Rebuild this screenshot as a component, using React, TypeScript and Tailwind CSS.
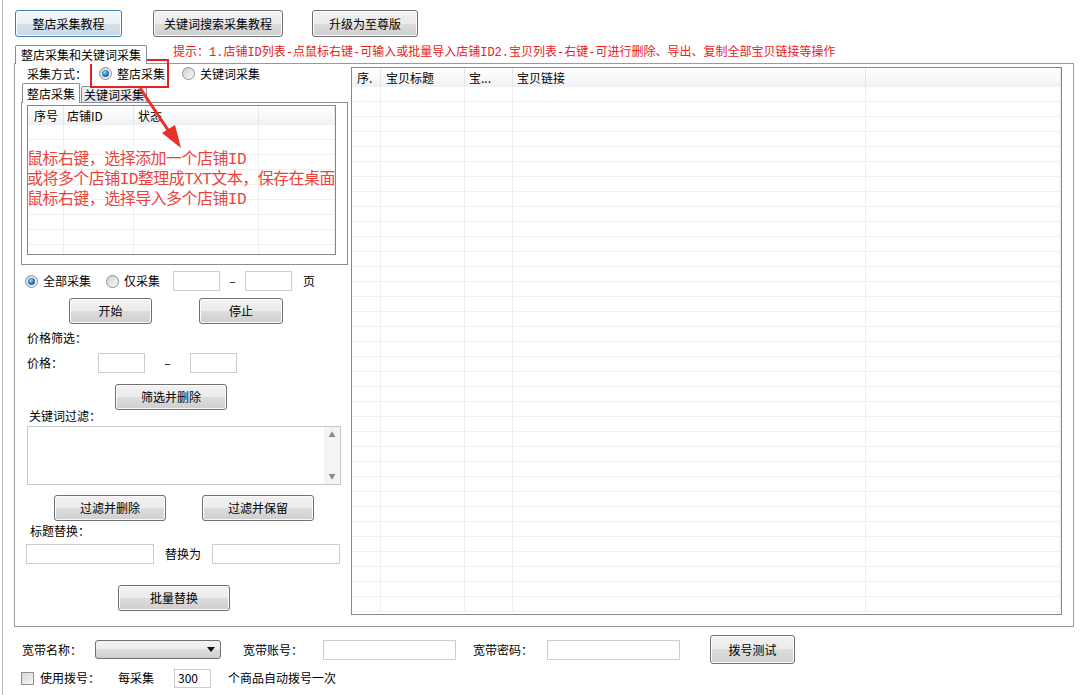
import React from "react";

const btn =
  "flex shrink-0 items-center justify-center rounded-[3px] border border-[#707070] bg-[linear-gradient(to_bottom,#f2f2f2_0%,#ebebeb_50%,#dddddd_50%,#cfcfcf_100%)] shadow-[inset_0_0_0_1px_#fbfbfb] text-[12px] text-black";
const btnFocus =
  "flex shrink-0 items-center justify-center rounded-[3px] border border-[#3c7fb1] bg-[linear-gradient(to_bottom,#f4f8fb_0%,#e8eff5_50%,#d6e2ec_50%,#c9d8e5_100%)] shadow-[inset_0_0_0_1px_#fbfdff] text-[12px] text-black";
const input = "shrink-0 border border-[#cdcdcd] bg-white";

function Radio({ on }: { on?: boolean }) {
  return (
    <span className="flex h-[13px] w-[13px] shrink-0 items-center justify-center rounded-full border border-[#8e8f8f] bg-[linear-gradient(135deg,#cfcfcf,#fbfbfb)]">
      {on && (
        <span className="h-[7px] w-[7px] rounded-full bg-[radial-gradient(circle_at_40%_35%,#9fdcff_0%,#2d7ec1_45%,#0c3f6e_100%)]" />
      )}
    </span>
  );
}

const leftCols = [
  { w: "w-[36px]", label: "序号", pl: "pl-[6px]" },
  { w: "w-[70px]", label: "店铺ID", pl: "pl-[3px]" },
  { w: "w-[125px]", label: "状态", pl: "pl-[4px]" },
  { w: "w-[76px]", label: "", pl: "" },
];

const rightCols = [
  { w: "w-[29px]", label: "序.", pl: "pl-[5px]" },
  { w: "w-[84px]", label: "宝贝标题", pl: "pl-[5px]" },
  { w: "w-[48px]", label: "宝...", pl: "pl-[4px]" },
  { w: "w-[353px]", label: "宝贝链接", pl: "pl-[4px]" },
  { w: "w-[195px]", label: "", pl: "" },
];

function ListView({
  cols,
  rows,
  className,
  children,
}: {
  cols: { w: string; label: string; pl: string }[];
  rows: number;
  className: string;
  children?: React.ReactNode;
}) {
  return (
    <div className={"relative flex shrink-0 flex-col border border-[#828790] bg-white " + className}>
      <div className="flex h-[19px] shrink-0 overflow-hidden bg-[linear-gradient(to_bottom,#ffffff_0%,#f7f8f9_60%,#eef0f2_100%)]">
        {cols.map((c, i) => (
          <div
            key={i}
            className={
              "flex h-full shrink-0 items-center border-r border-[#e3e5e8] text-[12px] text-black " + c.w + " " + c.pl
            }
          >
            {c.label}
          </div>
        ))}
      </div>
      <div className="min-h-0 flex-1 overflow-hidden">
        {Array.from({ length: rows }).map((_, r) => (
          <div key={r} className="flex h-[15px]">
            {cols.map((c, i) => (
              <div key={i} className={"h-full shrink-0 border-b border-r border-[#efefef] " + c.w} />
            ))}
          </div>
        ))}
      </div>
      {children}
    </div>
  );
}

export default function App() {
  return (
    <div className="relative h-[695px] w-[1080px] overflow-hidden bg-[linear-gradient(to_right,#fff_2px,#b9b9b9_2px,#b9b9b9_3px,#fff_3px)] font-[family-name:'Noto_Sans_CJK_SC','Noto_Sans',sans-serif] text-[12px] leading-none text-black">
      {/* top buttons */}
      <div className="flex pl-[15px] pt-[10px]">
        <div className={btnFocus + " h-[27px] w-[107px]"}>整店采集教程</div>
        <div className={btn + " ml-[31px] h-[27px] w-[130px]"}>关键词搜索采集教程</div>
        <div className={btn + " ml-[29px] h-[27px] w-[106px]"}>升级为至尊版</div>
      </div>

      {/* tab row */}
      <div className="mt-[8px] flex h-[18px] items-start">
        <div className="relative z-10 ml-[15px] flex h-[19px] w-[132px] items-center rounded-t-[2px] border border-b-0 border-[#898c95] bg-white pl-[5px] text-[12px]">
          整店采集和关键词采集
        </div>
        <div className="ml-[26px] font-[family-name:'Liberation_Mono','Noto_Sans_CJK_SC',monospace] text-[12px] leading-[16px] text-[#e52222]">
          提示：1.店铺ID列表-点鼠标右键-可输入或批量导入店铺ID2.宝贝列表-右键-可进行删除、导出、复制全部宝贝链接等操作
        </div>
      </div>

      {/* main panel */}
      <div className="ml-[14px] flex h-[564px] w-[1060px] border border-[#9a9a9a] bg-white">
        {/* left column */}
        <div className="flex w-[336px] shrink-0 flex-col">
          <div className="flex h-[19px] items-center">
            <span className="ml-[12px] w-[60px]">采集方式：</span>
            <span className="ml-[12px]">
              <Radio on />
            </span>
            <span className="ml-[5px] w-[48px]">整店采集</span>
            <span className="ml-[17px]">
              <Radio />
            </span>
            <span className="ml-[5px]">关键词采集</span>
          </div>

          {/* inner tabs */}
          <div className="flex h-[19px] items-end">
            <div className="relative z-10 ml-[7px] -mb-px flex h-[20px] w-[58px] items-center justify-center rounded-t-[2px] border border-b-0 border-[#898c95] bg-white">
              整店采集
            </div>
            <div className="ml-px flex h-[16px] w-[66px] items-center justify-center rounded-t-[2px] border border-b-0 border-[#898c95] bg-[linear-gradient(to_bottom,#f3f3f3,#e3e3e3)]">
              关键词采集
            </div>
          </div>
          <div className="ml-[6px] h-[163px] w-[327px] border border-[#898c95] bg-white pl-[5px] pt-[2px]">
            <ListView cols={leftCols} rows={9} className="h-[150px] w-[309px]">
              <div className="absolute left-[-1px] top-[44px] whitespace-nowrap font-[family-name:'Liberation_Mono','Noto_Sans_CJK_SC',monospace] text-[16px] leading-[20px] tracking-[-0.55px] text-[#e8443d]">
                <div>鼠标右键，选择添加一个店铺ID</div>
                <div>或将多个店铺ID整理成TXT文本，保存在桌面</div>
                <div>鼠标右键，选择导入多个店铺ID</div>
              </div>
            </ListView>
          </div>

          {/* radio row */}
          <div className="mt-[6px] flex h-[20px] items-center">
            <span className="ml-[10px]">
              <Radio on />
            </span>
            <span className="ml-[5px] w-[48px]">全部采集</span>
            <span className="ml-[15px]">
              <Radio />
            </span>
            <span className="ml-[5px] w-[36px]">仅采集</span>
            <div className={input + " ml-[13px] h-[20px] w-[47px]"} />
            <span className="w-[25px] text-center">–</span>
            <div className={input + " h-[20px] w-[47px]"} />
            <span className="ml-[11px]">页</span>
          </div>

          <div className="mt-[7px] flex h-[26px]">
            <div className={btn + " ml-[54px] h-[26px] w-[83px]"}>开始</div>
            <div className={btn + " ml-[47px] h-[26px] w-[84px]"}>停止</div>
          </div>

          <div className="mt-[4px] flex h-[20px] items-center pl-[12px]">价格筛选：</div>

          <div className="mt-[5px] flex h-[20px] items-center">
            <span className="ml-[12px] w-[71px]">价格：</span>
            <div className={input + " h-[20px] w-[47px]"} />
            <span className="w-[45px] text-center">–</span>
            <div className={input + " h-[20px] w-[47px]"} />
          </div>

          <div className="mt-[11px] flex h-[26px]">
            <div className={btn + " ml-[100px] h-[26px] w-[112px]"}>筛选并删除</div>
          </div>

          <div className="h-[12px] pl-[14px] leading-[12px]">关键词过滤：</div>

          <div className="ml-[12px] mt-[4px] flex h-[59px] w-[314px] border border-[#c8c8c8] bg-white">
            <div className="flex-1" />
            <div className="flex w-[16px] flex-col items-center justify-between bg-[#f4f4f4] py-[4px] text-[7px] leading-none text-[#8a8a8a]">
              <span>▲</span>
              <span>▼</span>
            </div>
          </div>

          <div className="mt-[10px] flex h-[26px]">
            <div className={btn + " ml-[39px] h-[26px] w-[112px]"}>过滤并删除</div>
            <div className={btn + " ml-[36px] h-[26px] w-[112px]"}>过滤并保留</div>
          </div>

          <div className="mt-[4px] h-[12px] pl-[15px] leading-[12px]">标题替换：</div>

          <div className="mt-[7px] flex h-[20px] items-center">
            <div className={input + " ml-[11px] h-[20px] w-[128px]"} />
            <span className="ml-[11px] w-[47px]">替换为</span>
            <div className={input + " h-[20px] w-[128px]"} />
          </div>

          <div className="mt-[21px] flex h-[26px]">
            <div className={btn + " ml-[103px] h-[26px] w-[112px]"}>批量替换</div>
          </div>
        </div>

        {/* right list */}
        <div className="mt-[3px]">
          <ListView cols={rightCols} rows={35} className="h-[548px] w-[711px]" />
        </div>
      </div>

      {/* bottom row A */}
      <div className="mt-[8px] flex h-[29px] items-center">
        <span className="ml-[22px] w-[73px]">宽带名称：</span>
        <div className="relative flex h-[19px] w-[126px] shrink-0 items-center justify-end rounded-[3px] border border-[#707070] bg-[linear-gradient(to_bottom,#f2f2f2_0%,#ebebeb_50%,#dddddd_50%,#cfcfcf_100%)] pr-[5px]">
          <svg width="8" height="5" viewBox="0 0 8 5">
            <path d="M0 0 H8 L4 5 Z" fill="#111" />
          </svg>
        </div>
        <span className="ml-[22px] w-[80px]">宽带账号：</span>
        <div className={input + " h-[20px] w-[133px]"} />
        <span className="ml-[17px] w-[74px]">宽带密码：</span>
        <div className={input + " h-[20px] w-[133px]"} />
        <div className={btn + " ml-[30px] h-[29px] w-[85px]"}>拨号测试</div>
      </div>

      {/* bottom row B */}
      <div className="mt-[4px] flex h-[20px] items-center">
        <span className="ml-[21px] h-[13px] w-[13px] shrink-0 border border-[#8e8f8f] bg-[linear-gradient(135deg,#d6d6d6,#f7f7f7)]" />
        <span className="ml-[6px] w-[78px]">使用拨号：</span>
        <span className="w-[56px]">每采集</span>
        <div className={input + " flex h-[19px] w-[37px] items-center pl-[3px] text-[12px]"}>300</div>
        <span className="ml-[17px]">个商品自动拨号一次</span>
      </div>

      {/* overlays: red highlight box & arrow */}
      <div className="pointer-events-none absolute left-[90px] top-[59px] h-[29px] w-[79px] border-2 border-[#e52222]" />
      <svg
        className="pointer-events-none absolute left-0 top-0"
        width="1080"
        height="695"
        viewBox="0 0 1080 695"
      >
        <line x1="140" y1="88" x2="172" y2="136" stroke="#e8302a" strokeWidth="3" />
        <polygon points="181,148 162,133 175,125" fill="#e8302a" />
      </svg>
    </div>
  );
}
